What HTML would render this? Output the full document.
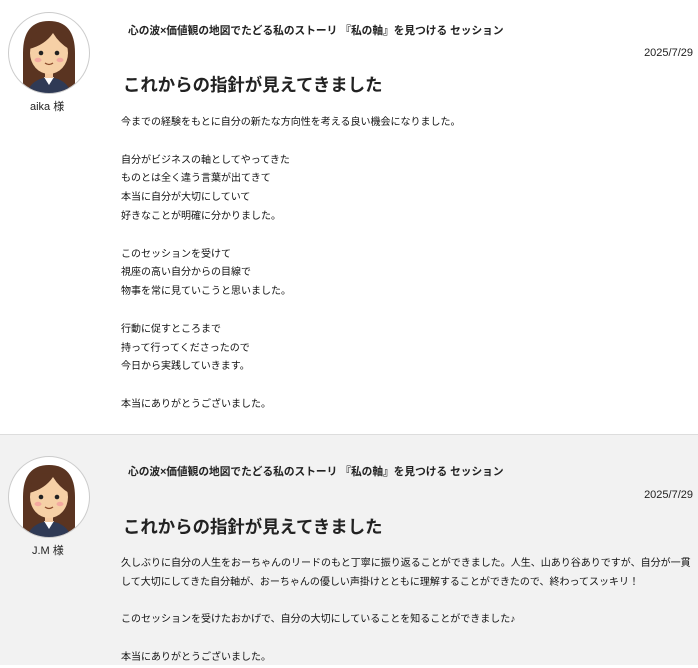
<!DOCTYPE html>
<html><head><meta charset="utf-8"><style>
body{margin:0;width:698px;height:665px;overflow:hidden;background:#fff;font-family:"Liberation Sans","Noto Sans CJK JP",sans-serif;color:#222;position:relative}
.sec{position:absolute;left:0;width:698px}
.a{position:absolute;font-size:11px;white-space:nowrap}
.h{font-weight:bold;font-size:10.7px}
.t{font-weight:bold;font-size:17.4px}
.b{font-size:10px;line-height:18.8px;white-space:pre;color:#111}
.av{position:absolute;left:8px;width:80px;height:80px;border-radius:50%;border:1px solid #ccc;background:#fff;overflow:hidden}
</style></head><body>
<div class="sec" style="top:0;height:434px;background:#fff;border-bottom:1px solid #ddd"></div>
<div class="sec" style="top:435px;height:230px;background:#f2f2f2"></div>

<svg width="0" height="0" style="position:absolute"><defs>
<g id="girl">
<path d="M14 78 L14 40 Q14 8 40 8 Q66 8 66 40 L66 78 Z" fill="#5a3421"/>
<path d="M18 80 Q22 66 40 64 Q58 66 62 80 Z" fill="#2f3a55"/>
<path d="M35 64 L40 72 L45 64 Z" fill="#fff"/>
<rect x="36" y="56" width="8" height="9" fill="#f4c9a0"/>
<ellipse cx="40" cy="40" rx="19" ry="21" fill="#f6d0a6"/>
<path d="M20 36 Q22 16 40 16 Q58 16 60 36 Q50 30 44 20 Q36 32 20 36 Z" fill="#5a3421"/>
<circle cx="32" cy="40" r="2.3" fill="#222"/><circle cx="48" cy="40" r="2.3" fill="#222"/>
<ellipse cx="29" cy="47" rx="3.5" ry="2.2" fill="#f3a9a0"/><ellipse cx="51" cy="47" rx="3.5" ry="2.2" fill="#f3a9a0"/>
<path d="M36 50 Q40 53 44 50" stroke="#8a4a2a" stroke-width="1.3" fill="none"/>
</g></defs></svg>

<div class="av" style="top:12px"><svg width="80" height="80"><use href="#girl"/></svg></div>
<div class="a" style="left:30px;top:98px">aika 様</div>
<div class="a h" style="left:128px;top:23px">心の波×価値観の地図でたどる私のストーリ 『私の軸』を見つける セッション</div>
<div class="a" style="right:5px;top:47px">2025/7/29</div>
<div class="a t" style="left:123px;top:72px">これからの指針が見えてきました</div>
<div class="a b" style="left:121px;top:114px">今までの経験をもとに自分の新たな方向性を考える良い機会になりました。

自分がビジネスの軸としてやってきた
ものとは全く違う言葉が出てきて
本当に自分が大切にしていて
好きなことが明確に分かりました。

このセッションを受けて
視座の高い自分からの目線で
物事を常に見ていこうと思いました。

行動に促すところまで
持って行ってくださったので
今日から実践していきます。

本当にありがとうございました。</div>

<div class="av" style="top:456px"><svg width="80" height="80"><use href="#girl"/></svg></div>
<div class="a" style="left:32px;top:542px">J.M 様</div>
<div class="a h" style="left:128px;top:464px">心の波×価値観の地図でたどる私のストーリ 『私の軸』を見つける セッション</div>
<div class="a" style="right:5px;top:489px">2025/7/29</div>
<div class="a t" style="left:123px;top:514px">これからの指針が見えてきました</div>
<div class="a b" style="left:121px;top:555px">久しぶりに自分の人生をおーちゃんのリードのもと丁寧に振り返ることができました。人生、山あり谷ありですが、自分が一貫
して大切にしてきた自分軸が、おーちゃんの優しい声掛けとともに理解することができたので、終わってスッキリ！

このセッションを受けたおかげで、自分の大切にしていることを知ることができました♪

本当にありがとうございました。</div>
</body></html>
